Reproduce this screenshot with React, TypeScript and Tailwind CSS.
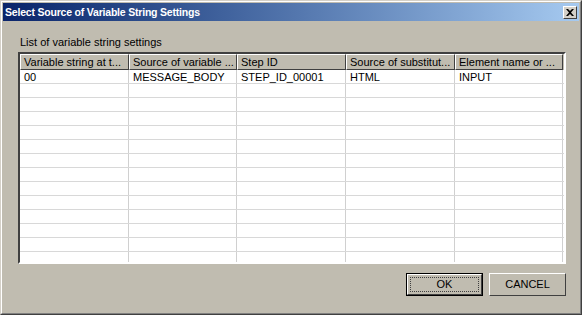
import React from "react";

const columns = [
  { title: "Variable string at t...", w: "w-[109px]" },
  { title: "Source of variable ...", w: "w-[108px]" },
  { title: "Step ID", w: "w-[109px]" },
  { title: "Source of substitut...", w: "w-[109px]" },
  { title: "Element name or ...", w: "w-[108px]" },
];

const rows: string[][] = [
  ["00", "MESSAGE_BODY", "STEP_ID_00001", "HTML", "INPUT"],
  ...Array.from({ length: 13 }, () => ["", "", "", "", ""]),
];

export default function App() {
  return (
    <div
      className="w-[582px] h-[315px] bg-[#c0bcb0] border border-t-[#d4d0c8] border-l-[#d4d0c8] border-r-[#404040] border-b-[#404040] text-[11px] text-black"
      style={{ fontFamily: '"Liberation Sans", Arial, sans-serif' }}
    >
      <div className="w-full h-full border border-t-white border-l-white border-r-[#808080] border-b-[#808080] p-px flex flex-col">
        {/* title bar */}
        <div className="h-[18px] flex items-center justify-between pl-[2px] pr-[2px] bg-gradient-to-r from-[#0a246a] to-[#a6caf0]">
          <span className="text-white font-bold text-[10.5px] tracking-[-0.2px] leading-none">
            Select Source of Variable String Settings
          </span>
          <div className="w-[14px] h-[13px] bg-[#d4d0c8] border border-t-white border-l-white border-r-[#404040] border-b-[#404040] flex items-center justify-center">
            <svg width="8" height="7" viewBox="0 0 8 7">
              <path d="M0 0h2l2 2 2-2h2L5 3.5 8 7H6L4 5 2 7H0l3-3.5z" fill="#000" />
            </svg>
          </div>
        </div>

        <div className="flex flex-col pl-[15px] pr-[13px] pt-[16px]">
          <div className="leading-none h-[15px] pl-[2px]">List of variable string settings</div>
          <div className="h-[212px] border-2 border-t-[#404040] border-l-[#404040] border-r-white border-b-white bg-white overflow-hidden">
            <div className="flex h-[16px] bg-[#c0bcb0]">
              {columns.map((c) => (
                <div
                  key={c.title}
                  className={`${c.w} shrink-0 border border-t-white border-l-white border-r-[#404040] border-b-[#404040] px-[3px] leading-[14px] whitespace-nowrap overflow-hidden`}
                >
                  {c.title}
                </div>
              ))}
            </div>
            {rows.map((r, i) => (
              <div key={i} className="flex h-[14px] border-b border-[#d8d8d8]">
                {r.map((cell, j) => (
                  <div
                    key={j}
                    className={`${columns[j].w} shrink-0 border-r border-[#d0d0d0] px-[4px] leading-[14px] whitespace-nowrap`}
                  >
                    {cell}
                  </div>
                ))}
              </div>
            ))}
          </div>

          <div className="flex justify-end gap-[6px] mt-[9px]">
            <button className="w-[77px] h-[23px] border border-black p-0 bg-[#c0bcb0]">
              <div className="w-full h-full border border-t-white border-l-white border-r-[#404040] border-b-[#404040] p-[2px]">
                <div className="w-full h-full border border-dotted border-[#404040] flex items-center justify-center leading-none">
                  OK
                </div>
              </div>
            </button>
            <button className="w-[77px] h-[23px] bg-[#c0bcb0] border border-t-white border-l-white border-r-[#404040] border-b-[#404040] flex items-center justify-center leading-none">
              CANCEL
            </button>
          </div>
        </div>
      </div>
    </div>
  );
}
